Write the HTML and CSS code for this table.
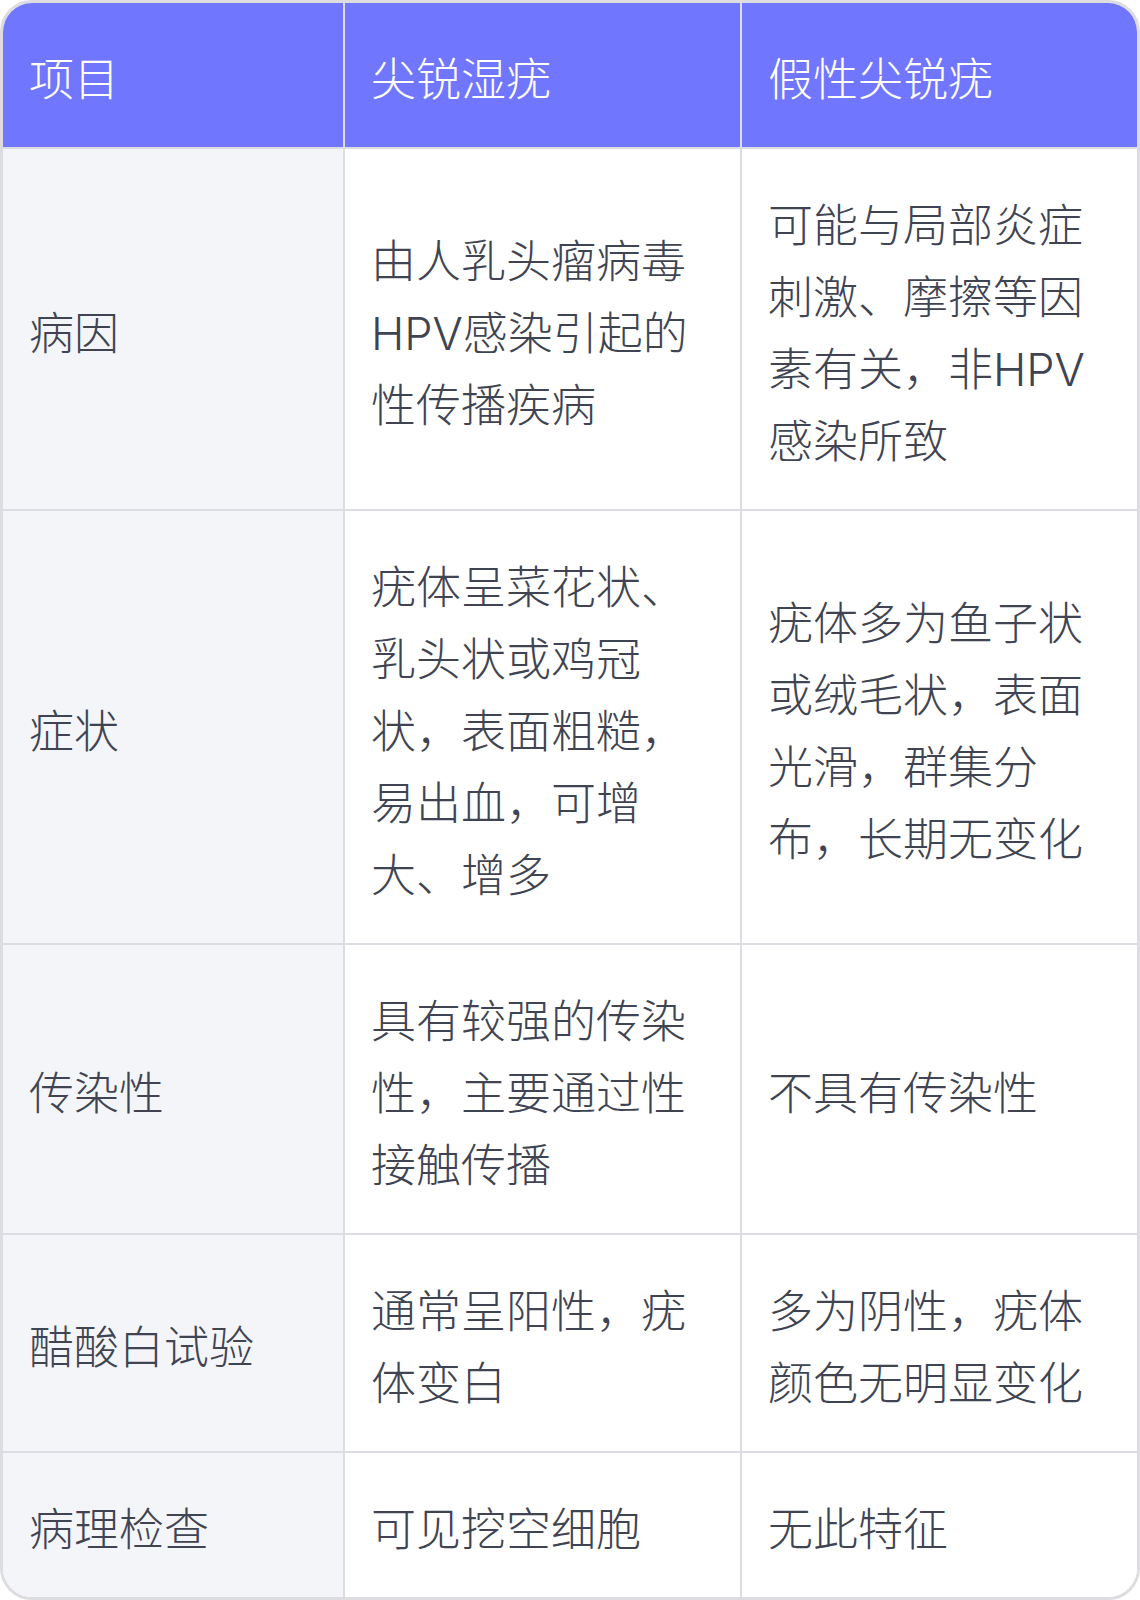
FILE: index.html
```html
<!DOCTYPE html>
<html lang="zh-CN">
<head>
<meta charset="utf-8">
<title>尖锐湿疣与假性尖锐疣对比</title>
<link rel="stylesheet" href="styles.css">
</head>
<body>
<div class="table">
  <div class="cell head first">项目</div>
  <div class="cell head">尖锐湿疣</div>
  <div class="cell head last">假性尖锐疣</div>

  <div class="cell label">病因</div>
  <div class="cell">由人乳头瘤病毒<br>HPV感染引起的<br>性传播疾病</div>
  <div class="cell last">可能与局部炎症<br>刺激、摩擦等因<br>素有关，非HPV<br>感染所致</div>

  <div class="cell label">症状</div>
  <div class="cell">疣体呈菜花状、<br>乳头状或鸡冠<br>状，表面粗糙，<br>易出血，可增<br>大、增多</div>
  <div class="cell last">疣体多为鱼子状<br>或绒毛状，表面<br>光滑，群集分<br>布，长期无变化</div>

  <div class="cell label">传染性</div>
  <div class="cell">具有较强的传染<br>性，主要通过性<br>接触传播</div>
  <div class="cell last">不具有传染性</div>

  <div class="cell label">醋酸白试验</div>
  <div class="cell">通常呈阳性，疣<br>体变白</div>
  <div class="cell last">多为阴性，疣体<br>颜色无明显变化</div>

  <div class="cell label bottom">病理检查</div>
  <div class="cell bottom">可见挖空细胞</div>
  <div class="cell last bottom">无此特征</div>
</div>
</body>
</html>
```

FILE: styles.css
```css
html, body {
  margin: 0;
  padding: 0;
  background: #ffffff;
}

.table {
  box-sizing: border-box;
  width: 1140px;
  display: grid;
  grid-template-columns: 342px 397px 395px;
  border: 3px solid #dcdce1;
  border-radius: 32px;
  overflow: hidden;
  font-family: "Inter", "Noto Sans CJK SC", sans-serif;
  font-weight: 300;
  font-size: 45px;
  line-height: 72px;
  color: #404452;
}

.cell {
  display: flex;
  align-items: center;
  padding: 41px 26px 31px 26px;
  border-right: 2px solid #dcdde2;
  border-bottom: 2px solid #dcdde2;
  background: #ffffff;
}

.cell.last {
  border-right: none;
}

.cell.bottom {
  border-bottom: none;
}

.cell.head {
  background: #7176ff;
  color: #ffffff;
}

.cell.label {
  background: #f4f5f9;
}
```
